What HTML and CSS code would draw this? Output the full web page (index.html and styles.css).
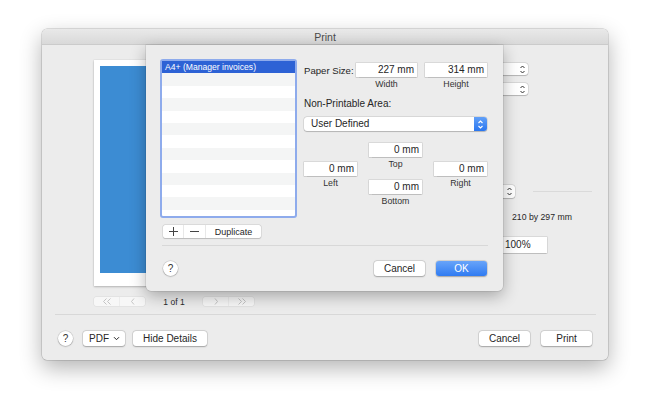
FILE: index.html
```html
<!DOCTYPE html>
<html lang="en">
<head>
<meta charset="utf-8">
<title>Print</title>
<link rel="stylesheet" href="styles.css">
</head>
<body>
<div class="window">
  <div class="titlebar">Print</div>
  <div class="main">
    <div class="preview">
      <div class="paper"><div class="printable"></div></div>
      <div class="pager">
        <div class="nav-seg">
          <span class="nav-item"><svg width="10" height="7" viewBox="0 0 10 7"><path d="M4.5 0.5 L1.5 3.5 L4.5 6.5 M8.5 0.5 L5.5 3.5 L8.5 6.5" fill="none" stroke="currentColor" stroke-width="0.9"/></svg></span>
          <span class="nav-item"><svg width="6" height="7" viewBox="0 0 6 7"><path d="M4 0.5 L1.5 3.5 L4 6.5" fill="none" stroke="currentColor" stroke-width="0.9"/></svg></span>
        </div>
        <span class="page-count">1 of 1</span>
        <div class="nav-seg">
          <span class="nav-item"><svg width="6" height="7" viewBox="0 0 6 7"><path d="M2 0.5 L4.5 3.5 L2 6.5" fill="none" stroke="currentColor" stroke-width="0.9"/></svg></span>
          <span class="nav-item"><svg width="10" height="7" viewBox="0 0 10 7"><path d="M1.5 0.5 L4.5 3.5 L1.5 6.5 M5.5 0.5 L8.5 3.5 L5.5 6.5" fill="none" stroke="currentColor" stroke-width="0.9"/></svg></span>
        </div>
      </div>
    </div>
    <div class="settings">
      <div class="row row-printer">
        <div class="popup popup-wide"><svg class="stepper" width="7" height="11" viewBox="0 0 7 11"><path d="M1.5 4 L3.5 2 L5.5 4 M1.5 7 L3.5 9 L5.5 7" fill="none" stroke="currentColor" stroke-width="1"/></svg></div>
      </div>
      <div class="row row-presets">
        <div class="popup popup-wide"><svg class="stepper" width="7" height="11" viewBox="0 0 7 11"><path d="M1.5 4 L3.5 2 L5.5 4 M1.5 7 L3.5 9 L5.5 7" fill="none" stroke="currentColor" stroke-width="1"/></svg></div>
      </div>
      <div class="row row-paper">
        <div class="popup popup-mid"><svg class="stepper" width="7" height="11" viewBox="0 0 7 11"><path d="M1.5 4 L3.5 2 L5.5 4 M1.5 7 L3.5 9 L5.5 7" fill="none" stroke="currentColor" stroke-width="1"/></svg></div>
        <div class="rule"></div>
      </div>
      <div class="paper-dims">210 by 297 mm</div>
      <div class="row row-scale">
        <div class="field field-scale">100%</div>
      </div>
    </div>
  </div>
  <div class="divider"></div>
  <div class="footer">
    <div class="help">?</div>
    <div class="btn btn-pdf"><span>PDF</span><svg width="7" height="5" viewBox="0 0 7 5"><path d="M1 1.2 L3.5 3.7 L6 1.2" fill="none" stroke="currentColor" stroke-width="1"/></svg></div>
    <div class="btn btn-details">Hide Details</div>
    <div class="spacer"></div>
    <div class="btn btn-std">Cancel</div>
    <div class="btn btn-std btn-print">Print</div>
  </div>

  <div class="sheet">
    <div class="sheet-top">
      <div class="list-col">
        <div class="list">
          <div class="list-row selected">A4+ (Manager invoices)</div>
        </div>
        <div class="list-buttons">
          <span class="lb lb-add"><svg width="9" height="9" viewBox="0 0 9 9"><path d="M4.5 0 V9 M0 4.5 H9" stroke="currentColor" stroke-width="1"/></svg></span>
          <span class="lb lb-remove"><svg width="9" height="9" viewBox="0 0 9 9"><path d="M0 4.5 H9" stroke="currentColor" stroke-width="1"/></svg></span>
          <span class="lb lb-dup">Duplicate</span>
        </div>
      </div>
      <div class="form-col">
        <div class="size-row">
          <span class="size-label">Paper Size:</span>
          <div class="field w-width">227 mm</div>
          <div class="field w-height">314 mm</div>
        </div>
        <div class="caption-row">
          <span class="caption w-width">Width</span>
          <span class="caption w-height">Height</span>
        </div>
        <div class="np-label">Non-Printable Area:</div>
        <div class="popup-np">
          <span class="np-text">User Defined</span>
          <span class="np-stepper"><svg width="7" height="11" viewBox="0 0 7 11"><path d="M1.5 4 L3.5 2 L5.5 4 M1.5 7 L3.5 9 L5.5 7" fill="none" stroke="currentColor" stroke-width="1.1"/></svg></span>
        </div>
        <div class="margins">
          <div class="m-col m-side">
            <div class="field">0 mm</div>
            <div class="m-caption">Left</div>
          </div>
          <div class="m-col">
            <div class="field">0 mm</div>
            <div class="m-caption">Top</div>
            <div class="field m-bottom">0 mm</div>
            <div class="m-caption">Bottom</div>
          </div>
          <div class="m-col m-side">
            <div class="field">0 mm</div>
            <div class="m-caption">Right</div>
          </div>
        </div>
      </div>
    </div>
    <div class="sheet-divider"></div>
    <div class="sheet-bottom">
      <div class="help">?</div>
      <div class="spacer"></div>
      <div class="btn btn-std">Cancel</div>
      <div class="btn btn-std btn-ok">OK</div>
    </div>
  </div>
</div>
</body>
</html>
```

FILE: styles.css
```css
* { box-sizing: border-box; }
html, body { margin: 0; padding: 0; }
body {
  width: 650px;
  height: 417px;
  overflow: hidden;
  background: #ffffff;
  font-family: "Liberation Sans", Arial, sans-serif;
  font-size: 10px;
  color: #262626;
}

.field {
  height: 14px;
  line-height: 14px;
  background: #fff;
  text-align: right;
  padding-right: 3px;
  white-space: nowrap;
  box-shadow: 0 0 0 0.5px rgba(0,0,0,0.16), 0 0.5px 1px rgba(0,0,0,0.12);
}

.window {
  position: relative;
  width: 566px;
  height: 331px;
  margin: 29px 0 0 42px;
  background: #ececec;
  border-radius: 5px;
  box-shadow: 0 0 0 0.5px rgba(0,0,0,0.22), 0 8px 22px rgba(0,0,0,0.3);
  display: flex;
  flex-direction: column;
}

.titlebar {
  height: 16px;
  line-height: 16px;
  text-align: center;
  font-size: 10.5px;
  color: #4b4b4b;
  background: linear-gradient(#e9e9e9, #d9d9d9);
  border-bottom: 1px solid #cbcbcb;
  border-radius: 5px 5px 0 0;
}

.main {
  display: flex;
  padding: 15px 0 0 52px;
}

.preview { width: 160px; flex: none; }
.paper {
  height: 226px;
  background: #fff;
  padding: 6px 6px 13px 6px;
  box-shadow: 0 1px 2px rgba(0,0,0,0.22), 0 0 0 0.5px rgba(0,0,0,0.05);
}
.printable { height: 100%; background: #3c8cd3; }

.pager {
  display: flex;
  justify-content: space-between;
  align-items: center;
  margin-top: 11px;
  height: 9px;
}
.nav-seg {
  display: flex;
  width: 51px;
  height: 9px;
  background: #f7f7f7;
  border-radius: 2px;
  box-shadow: 0 0 0 0.5px rgba(0,0,0,0.07);
}
.nav-item {
  flex: 1;
  display: flex;
  align-items: center;
  justify-content: center;
  color: #bdbdbd;
}
.nav-item + .nav-item { border-left: 1px solid #ececec; }
.page-count { font-size: 8.5px; color: #2a2a2a; }

.settings {
  flex: 1;
  margin-left: 20px;
  padding-right: 16px;
  display: flex;
  flex-direction: column;
}
.row { display: flex; align-items: center; }
.popup {
  display: flex;
  align-items: center;
  justify-content: flex-end;
  background: #fff;
  border-radius: 3px;
  padding: 0 2px 0 6px;
  box-shadow: 0 0 0 0.5px rgba(0,0,0,0.14), 0 0.5px 1px rgba(0,0,0,0.18);
}
.stepper { color: #333; }
.row-printer { margin-top: 3px; height: 12px; }
.row-presets { margin-top: 8px; height: 12px; }
.popup-wide { width: 180px; height: 12px; margin-left: 74px; }
.row-paper { margin-top: 90px; height: 13px; }
.popup-mid { width: 167px; height: 13px; margin-left: 74px; }
.rule { flex: 1; height: 1px; margin-left: 18px; background: #dadada; }
.paper-dims { margin: 14px 0 0 238px; font-size: 8.7px; line-height: 11px; }
.row-scale { margin-top: 14px; height: 16px; }
.field-scale {
  width: 46px;
  height: 16px;
  line-height: 16px;
  margin-left: 227px;
  text-align: left;
  padding: 0 0 0 4px;
}

.divider {
  margin: 8px 12px 0 13px;
  height: 1px;
  background: #d8d8d8;
}

.footer {
  display: flex;
  align-items: center;
  padding: 16px 16px 0 16px;
}
.help {
  width: 15px;
  height: 15px;
  border-radius: 50%;
  background: #fff;
  box-shadow: 0 0 0 0.5px rgba(0,0,0,0.14), 0 0.5px 1.5px rgba(0,0,0,0.25);
  display: flex;
  align-items: center;
  justify-content: center;
  font-size: 10px;
  color: #333;
}
.btn {
  height: 15px;
  line-height: 15px;
  background: #fff;
  border-radius: 3px;
  box-shadow: 0 0 0 0.5px rgba(0,0,0,0.14), 0 0.5px 1.5px rgba(0,0,0,0.25);
  text-align: center;
  font-size: 10px;
  color: #262626;
}
.btn-pdf {
  width: 42px;
  margin-left: 10px;
  display: flex;
  align-items: center;
  justify-content: space-between;
  padding: 0 5px 0 6px;
}
.btn-details { width: 74px; margin-left: 8px; }
.btn-std { width: 51px; }
.btn-print { margin-left: 11px; }
.spacer { flex: 1; }

.sheet {
  position: absolute;
  left: 104px;
  top: 16px;
  width: 357px;
  height: 246px;
  background: #ececec;
  border-radius: 0 0 5px 5px;
  box-shadow: 0 5px 16px rgba(0,0,0,0.3), 0 0 0 0.5px rgba(0,0,0,0.14);
  padding: 14px 16px 0 14px;
  display: flex;
  flex-direction: column;
}
.sheet-top { display: flex; }
.list-col { width: 137px; flex: none; }
.list {
  height: 159px;
  border: 2px solid #8eabec;
  border-radius: 3px;
  background: repeating-linear-gradient(#ffffff 0 12.4px, #f4f5f5 12.4px 24.8px);
}
.list-row.selected {
  height: 12.4px;
  line-height: 12.4px;
  padding-left: 3px;
  background: #2d62d5;
  color: #fff;
  font-size: 8.6px;
}
.list-buttons {
  display: flex;
  margin: 7px 0 0 3px;
  width: 98px;
  height: 13px;
  background: #fff;
  border-radius: 2px;
  box-shadow: 0 0 0 0.5px rgba(0,0,0,0.13), 0 0.5px 1px rgba(0,0,0,0.15);
}
.lb { display: flex; align-items: center; justify-content: center; color: #444; }
.lb-add { width: 20px; }
.lb-remove { width: 22px; border-left: 1px solid #e8e8e8; }
.lb-dup { flex: 1; border-left: 1px solid #e8e8e8; font-size: 9px; color: #262626; }

.form-col { margin-left: 7px; width: 183px; padding-top: 4px; }
.size-row { display: flex; align-items: center; height: 14px; }
.size-label { width: 52px; font-size: 9.6px; white-space: nowrap; }
.w-width { width: 61px; }
.w-height { width: 62px; margin-left: 8px; }
.caption-row { display: flex; margin: 2px 0 0 52px; }
.caption { font-size: 8.8px; line-height: 10px; text-align: center; color: #333; }
.np-label { margin-top: 9px; line-height: 12px; }
.popup-np {
  display: flex;
  margin-top: 7px;
  height: 14px;
  background: #fff;
  border-radius: 3px;
  box-shadow: 0 0 0 0.5px rgba(0,0,0,0.14), 0 0.5px 1px rgba(0,0,0,0.18);
}
.np-text { flex: 1; padding-left: 7px; line-height: 14px; }
.np-stepper {
  width: 13px;
  border-radius: 0 3px 3px 0;
  background: linear-gradient(#61a0f8, #2a76ef);
  color: #fff;
  display: flex;
  align-items: center;
  justify-content: center;
}
.margins {
  display: grid;
  grid-template-columns: 53px 53px 53px;
  column-gap: 12px;
  margin-top: 12px;
}
.m-side { padding-top: 19px; }
.m-caption { margin-top: 2px; line-height: 11px; font-size: 8.8px; text-align: center; color: #333; }
.m-bottom { margin-top: 10px; }

.sheet-divider {
  margin: 7px 0 0 2px;
  width: 326px;
  height: 1px;
  background: #d8d8d8;
}
.sheet-bottom {
  display: flex;
  align-items: center;
  margin-top: 15px;
  padding-left: 3px;
}
.btn-ok {
  margin-left: 11px;
  background: linear-gradient(#68a4f9, #2f7bf2);
  color: #fff;
}
```
